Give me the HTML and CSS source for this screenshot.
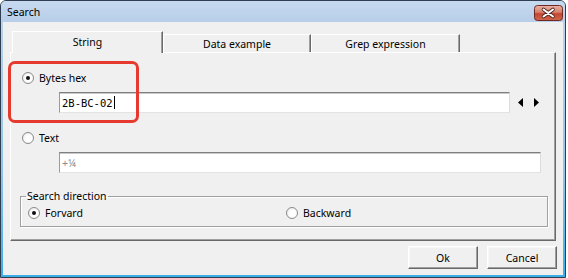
FILE: index.html
```html
<!DOCTYPE html>
<html>
<head>
<meta charset="utf-8">
<link rel="stylesheet" href="styles.css">
</head>
<body>
<div class="window">
  <div class="titlebar">
    <span class="title">Search</span>
    <span class="close">
      <svg width="29" height="16" viewBox="0 0 29 16">
        <defs>
          <linearGradient id="cg" x1="0" y1="0" x2="0" y2="1">
            <stop offset="0" stop-color="#eab3a6"/>
            <stop offset="0.45" stop-color="#d6806d"/>
            <stop offset="0.55" stop-color="#c4452f"/>
            <stop offset="1" stop-color="#d0674c"/>
          </linearGradient>
        </defs>
        <rect x="0.5" y="0.5" width="28" height="15" rx="3" fill="url(#cg)" stroke="#6e2a22"/>
        <path d="M9.5 4.5 L19 11.5 M19 4.5 L9.5 11.5" stroke="#4a2420" stroke-width="3.6" stroke-linecap="round"/>
        <path d="M9.5 4.5 L19 11.5 M19 4.5 L9.5 11.5" stroke="#ffffff" stroke-width="2" stroke-linecap="round"/>
      </svg>
    </span>
  </div>
  <div class="client">
    <div class="tabs">
      <div class="tab active tab-string">String</div>
      <div class="tab tab-data">Data example</div>
      <div class="tab tab-grep">Grep expression</div>
    </div>
    <div class="panel">
      <div class="opt opt-main"><span class="radio checked"></span><span>Bytes hex</span></div>
      <div class="field-row">
        <div class="input hex">2B-BC-02<span class="caret"></span></div>
        <svg class="spin" width="21" height="9" viewBox="0 0 21 9">
          <polygon points="0,4.5 5,0 5,9" fill="#000"/>
          <polygon points="16,0 21,4.5 16,9" fill="#000"/>
        </svg>
      </div>
      <div class="opt opt-main opt-text"><span class="radio"></span><span>Text</span></div>
      <div class="field-row">
        <div class="input wide muted">+¼</div>
      </div>
      <fieldset class="group">
        <legend>Search direction</legend>
        <div class="dir">
          <div class="opt dir-fwd"><span class="radio checked"></span><span>Forvard</span></div>
          <div class="opt"><span class="radio"></span><span>Backward</span></div>
        </div>
      </fieldset>
    </div>
    <div class="footer">
      <button class="btn">Ok</button>
      <button class="btn">Cancel</button>
    </div>
  </div>
  <div class="annot"></div>
</div>
</body>
</html>
```
FILE: styles.css
```css
* { box-sizing: border-box; }

body {
  margin: 0;
  background: #ffffff;
  font-family: "Noto Sans", sans-serif;
  font-size: 10.5px;
  color: #000;
}

.window {
  position: relative;
  width: 566px;
  height: 278px;
  border: 1px solid #2f3e50;
  border-radius: 6px 6px 0 0;
  display: flex;
  flex-direction: column;
  overflow: hidden;
  background: #bcd2ea;
}

.titlebar {
  height: 21px;
  flex: none;
  display: flex;
  align-items: center;
  padding: 1px 2px 0 6px;
  background: linear-gradient(#c6d9ef, #b8cfe9);
}

.title {
  font-size: 10.5px;
  line-height: 14px;
}

.close {
  margin-left: auto;
  display: flex;
  margin-top: 2px;
}

.client {
  flex: 1;
  display: flex;
  flex-direction: column;
  background: #f0f0f0;
  border-style: solid;
  border-width: 0 2px 2px 2px;
  border-image: linear-gradient(#bcd2ea, #8fc4ea 60%, #3aaee6) 1;
  padding: 9px 7px 0 7px;
}

/* Tabs */
.tabs {
  display: flex;
  align-items: flex-end;
  height: 22px;
  margin-left: 2px;
  margin-bottom: -1px;
  position: relative;
  z-index: 1;
}

.tab {
  height: 18px;
  margin-bottom: 1px;
  display: flex;
  align-items: center;
  justify-content: center;
  background: #f0f0f0;
  border-style: solid;
  border-width: 1px 1px 0 1px;
  border-color: #ffffff #696969 transparent #ffffff;
  box-shadow: inset -1px 0 0 #a0a0a0;
  line-height: 14px;
}

.tab.active {
  height: 22px;
  margin-bottom: 0;
  padding-bottom: 1px;
}

.tab-string { width: 151px; }
.tab-data { width: 148px; }
.tab-grep { width: 149px; }

/* Panel */
.panel {
  height: 189px;
  flex: none;
  border: 1px solid;
  border-color: #ffffff #696969 #696969 #ffffff;
  box-shadow: inset -1px -1px 0 #a0a0a0;
  padding: 18px 0 0 0;
}

.opt {
  display: flex;
  align-items: center;
  gap: 5px;
  height: 14px;
  line-height: 14px;
}

.opt-main {
  margin-left: 11px;
}

.opt-text {
  margin-top: 18px;
}

.radio {
  flex: none;
  width: 12px;
  height: 12px;
  border-radius: 50%;
  border: 1px solid #8a8a8a;
  background: radial-gradient(circle at 60% 60%, #ffffff 35%, #e4e4e4 100%);
  display: flex;
  align-items: center;
  justify-content: center;
}

.radio.checked::after {
  content: "";
  width: 4px;
  height: 4px;
  border-radius: 50%;
  background: #111111;
}

.field-row {
  display: flex;
  align-items: center;
  margin-top: 7px;
  margin-left: 48px;
}

.input {
  height: 21px;
  width: 451px;
  border: 1px solid;
  border-color: #7f7f7f #dcdcdc #e3e3e3 #9a9a9a;
  box-shadow: inset 0 1px 0 #c9c9c9;
  background: #ffffff;
  display: flex;
  align-items: center;
  padding-left: 2px;
  line-height: 14px;
}

.input.wide {
  width: 482px;
}

.hex {
  font-family: "DejaVu Sans Mono", monospace;
  font-size: 10.5px;
}

.caret {
  display: inline-block;
  width: 1px;
  height: 13px;
  background: #000;
  margin-left: 1px;
}

.muted {
  color: #8c8c8c;
}

.spin {
  margin-left: 8px;
  flex: none;
}

/* Group box */
.group {
  margin: 17px 0 0 9px;
  width: 528px;
  padding: 3px 7px 6px 7px;
  border: 1px solid #a0a0a0;
  box-shadow: inset 1px 1px 0 #ffffff, 1px 1px 0 #ffffff;
  min-inline-size: 0;
}

.group legend {
  padding: 0 1px;
  margin-left: -2px;
  line-height: 13px;
}

.dir {
  display: flex;
}

.dir-fwd {
  width: 258px;
}

/* Footer */
.footer {
  display: flex;
  justify-content: flex-end;
  gap: 9px;
  margin-top: 5px;
  margin-right: -1px;
}

.btn {
  width: 70px;
  height: 23px;
  font-family: "Noto Sans", sans-serif;
  font-size: 10.5px;
  color: #000;
  background: #f0f0f0;
  border: 1px solid;
  border-color: #ffffff #696969 #696969 #ffffff;
  box-shadow: inset -1px -1px 0 #a0a0a0, inset 1px 1px 0 #f7f7f7;
  padding: 0;
  margin: 0;
  line-height: 14px;
}

/* Annotation overlay */
.annot {
  position: absolute;
  left: 7px;
  top: 60px;
  width: 131px;
  height: 62px;
  border: 3px solid #e63a2f;
  border-radius: 7px;
}
```
